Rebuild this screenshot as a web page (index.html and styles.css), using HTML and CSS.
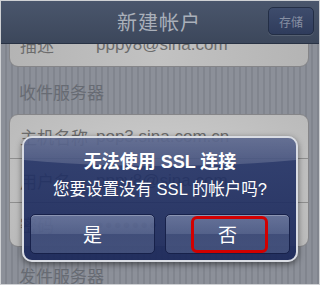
FILE: index.html
```html
<!DOCTYPE html>
<html lang="zh-CN">
<head>
<meta charset="utf-8">
<link rel="stylesheet" href="styles.css">
</head>
<body>
<div class="screen">
  <header class="navbar">
    <span></span>
    <h1 class="nav-title">新建帐户</h1>
    <button class="save-btn">存储</button>
  </header>
  <main class="content">
    <div class="card card-top">
      <div class="row"><span class="label">描述</span><span class="value">pppy8@sina.com</span></div>
    </div>
    <h2 class="section">收件服务器</h2>
    <div class="card card-glow">
      <div class="row"><span class="label">主机名称</span><span class="value">pop3.sina.com.cn</span></div>
      <div class="row"><span class="label">用户名</span><span class="value">pppy8@sina.com</span></div>
      <div class="row"><span class="label">密码</span><span class="value dots">●●●●●●●</span></div>
    </div>
    <h2 class="section section-out">发件服务器</h2>
  </main>
  <div class="alert">
    <div class="alert-title">无法使用 SSL 连接</div>
    <div class="alert-msg">您要设置没有 SSL 的帐户吗?</div>
    <div class="alert-buttons">
      <button class="alert-btn">是</button>
      <button class="alert-btn">否</button>
    </div>
  </div>
  <div class="highlight"></div>
</div>
</body>
</html>
```

FILE: styles.css
```css
* { box-sizing: border-box; margin: 0; padding: 0; }
html, body { margin: 0; background: #8a8e96; }
body { font-family: "Liberation Sans", "Noto Sans CJK SC", sans-serif; }

.screen {
  position: relative;
  width: 320px;
  height: 285px;
  overflow: hidden;
  border: 1px solid #cfd1d4;
  background: repeating-linear-gradient(90deg, #8c9099 0 4px, #81858e 4px 6px);
}

.navbar {
  position: relative;
  z-index: 2;
  height: 43px;
  display: grid;
  grid-template-columns: 1fr auto 1fr;
  align-items: center;
  background: linear-gradient(#4a566c, #3c475b);
  border-bottom: 1px solid #283244;
}
.nav-title {
  font-family: "Noto Sans CJK SC", sans-serif;
  font-weight: 400;
  font-size: 20px;
  letter-spacing: 1px;
  color: #aab0ba;
  line-height: 24px;
  margin-right: 2px;
}
.save-btn {
  justify-self: end;
  margin-right: 5px;
  margin-top: -2px;
  width: 46px;
  height: 28px;
  border-radius: 5px;
  border: 1px solid #232e45;
  background: linear-gradient(#3e4c6c, #2f3c5c);
  color: #8790a3;
  font-family: "Noto Sans CJK SC", sans-serif;
  font-size: 12px;
  box-shadow: 0 1px 0 rgba(255,255,255,0.12);
}

.content {
  margin-top: -22px;
  padding-left: 8px;
}
.card {
  width: 300px;
  border: 1px solid #858588;
  border-radius: 9px;
  background: linear-gradient(90deg, #b4b4b4, #c2c2c2 50%, #b4b4b4);
  overflow: hidden;
}
.card-glow {
  background: radial-gradient(ellipse 70% 90% at 50% 50%, #cfcfcf, #b8b8b8);
}
.row {
  height: 43px;
  display: flex;
  align-items: center;
  padding-left: 10px;
  font-size: 17px;
  color: #6c6c6c;
}
.row + .row { height: 44px; border-top: 1px solid #8e8e8e; }
.label {
  width: 76px;
  flex: none;
  font-family: "Noto Sans CJK SC", sans-serif;
}
.value { font-family: "Liberation Sans", sans-serif; }
.dots { font-size: 13px; letter-spacing: 1px; color: #5c5c5c; }

.section {
  font-family: "Noto Sans CJK SC", sans-serif;
  font-weight: 400;
  font-size: 17px;
  line-height: 20px;
  color: #676b73;
  padding: 15px 0 12px 10px;
}
.section-out { padding-top: 19px; }

.alert {
  position: absolute;
  z-index: 3;
  left: 21px;
  top: 135px;
  width: 276px;
  height: 126px;
  border: 2px solid #d9dce3;
  border-radius: 10px;
  overflow: hidden;
  background: linear-gradient(rgba(36,52,104,0.9), rgba(27,40,90,0.93));
  box-shadow: 0 2px 6px rgba(0,0,0,0.5);
  padding: 14px 6px 6px;
  color: #fff;
  text-align: center;
}
.alert::before {
  content: "";
  position: absolute;
  left: -40%;
  top: -44px;
  width: 180%;
  height: 72px;
  border-radius: 50%;
  background: linear-gradient(rgba(255,255,255,0.4), rgba(255,255,255,0.14));
}
.alert-title {
  position: relative;
  font-weight: 700;
  font-size: 18px;
  line-height: 20px;
}
.alert-msg {
  position: relative;
  margin-top: 7px;
  font-size: 16.5px;
  line-height: 20px;
}
.alert-buttons {
  position: relative;
  margin-top: 15px;
  display: flex;
  gap: 10px;
}
.alert-btn {
  width: 125px;
  height: 40px;
  border-radius: 5px;
  border: 1px solid #17214a;
  background: linear-gradient(rgba(140,152,185,0.6), rgba(118,132,168,0.55) 50%, rgba(80,94,135,0.6) 51%, rgba(86,100,140,0.6));
  box-shadow: inset 0 1px 0 rgba(255,255,255,0.25);
  color: #fff;
  font-family: "Noto Sans CJK SC", sans-serif;
  font-size: 19px;
  line-height: 38px;
}

.highlight {
  position: absolute;
  z-index: 4;
  left: 190px;
  top: 215px;
  width: 77px;
  height: 37px;
  border: 3px solid #d20000;
  border-radius: 6px;
}
```
